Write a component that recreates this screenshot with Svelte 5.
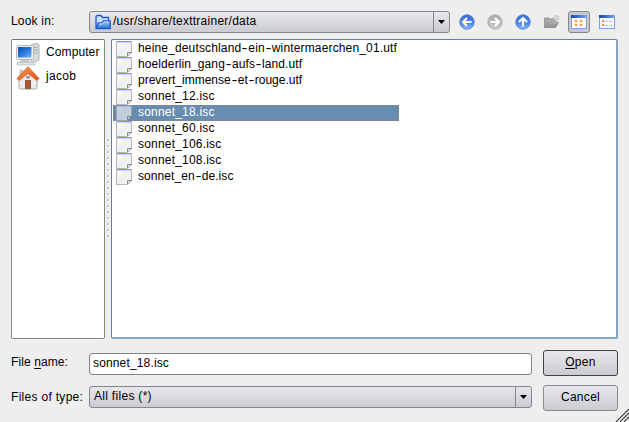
<script>
  const files = [
    ['heine_deutschland-ein-wintermaerchen_01.utf', 0.15],
    ['hoelderlin_gang-aufs-land.utf', 0.1],
    ['prevert_immense-et-rouge.utf', 0.0],
    ['sonnet_12.isc', 0.2],
    ['sonnet_18.isc', 0.2],
    ['sonnet_60.isc', 0.2],
    ['sonnet_106.isc', 0.2],
    ['sonnet_108.isc', 0.2],
    ['sonnet_en-de.isc', 0.07]
  ];
  const selected = 'sonnet_18.isc';
  const dots = Array.from({ length: 17 }, (_, i) => i);
</script>

{#snippet fileIcon()}
  <svg class="doc" width="16" height="16" viewBox="0 0 16 16">
    <path d="M.5 .5H15.5V11L11 15.5H.5Z" fill="url(#paper)" stroke="#b2b4ac" />
    <path d="M1 .5H15" stroke="#8294e6" />
    <path d="M1 1.5H15" stroke="#ccd4fa" />
    <path d="M11.5 15V11.5H15.5Z" fill="#fff" stroke="#888a80" />
  </svg>
{/snippet}

{#snippet round(kind, disabled)}
  <svg width="16" height="16" viewBox="0 0 16 16">
    <circle cx="8" cy="8" r="7.2" fill={disabled ? 'url(#grayball)' : 'url(#blueball)'} stroke={disabled ? '#aaa' : '#4a78d0'} stroke-width=".9" />
    <g transform={kind === 'right' ? 'rotate(180 8 8)' : kind === 'up' ? 'rotate(90 8 8)' : ''}>
      <path d="M12.5 8H4.5M8 4L4 8L8 12" fill="none" stroke="#fff" stroke-width="2.1" />
    </g>
  </svg>
{/snippet}

<div class="dialog">
  <svg class="defs" width="0" height="0">
    <defs>
      <linearGradient id="paper" x2="1" y2="1"><stop stop-color="#fff" /><stop offset=".5" stop-color="#eeeef0" /><stop offset="1" stop-color="#fff" /></linearGradient>
      <linearGradient id="blueball" x2="0" y2="1"><stop stop-color="#386dd8" /><stop offset=".6" stop-color="#4c8af0" /><stop offset="1" stop-color="#8cbcff" /></linearGradient>
      <linearGradient id="grayball" x2="0" y2="1"><stop stop-color="#aaa" /><stop offset="1" stop-color="#ccc" /></linearGradient>
      <linearGradient id="folder" x2="0" y2="1"><stop stop-color="#8fc4ff" /><stop offset="1" stop-color="#3278e4" /></linearGradient>
      <linearGradient id="screen" x2="1" y2="1"><stop stop-color="#0b50b8" /><stop offset=".5" stop-color="#2878dc" /><stop offset="1" stop-color="#76b8f8" /></linearGradient>
      <linearGradient id="titlebar" x2="1" y2="0"><stop stop-color="#1644b8" /><stop offset="1" stop-color="#70a8f0" /></linearGradient>
      <linearGradient id="roof" x2="1" y2="1"><stop stop-color="#ff9a58" /><stop offset="1" stop-color="#e4500e" /></linearGradient>
    </defs>
  </svg>

  <div class="row top">
    <span class="label">Look in:</span>
    <div class="combo path">
      <svg class="folder" width="16" height="16" viewBox="0 0 16 16">
        <path d="M1 14V3Q1 1.5 2.5 1.5H6L7.5 3.5H13.5V7" fill="#c8e0ff" stroke="#1c58cc" stroke-width="1.3" />
        <path d="M1.2 14.5L3.2 9H7L8.5 7H15.2V14.5Z" fill="url(#folder)" stroke="#1c58cc" stroke-width="1.3" />
        <path d="M4 10H7.5L9 8H14.3" fill="none" stroke="#d6eaff" />
      </svg>
      <span class="value">/usr/share/texttrainer/data</span>
      <span class="arrow"><svg width="7" height="4" viewBox="0 0 7 4"><path d="M0 0H7L3.5 4Z" /></svg></span>
    </div>
    <div class="tools">
      <span class="tool">{@render round('left', false)}</span>
      <span class="tool">{@render round('right', true)}</span>
      <span class="tool">{@render round('up', false)}</span>
      <span class="tool">
        <svg width="17" height="16" viewBox="0 0 17 16">
          <path d="M1.5 13V4H6L7 5H13V8" fill="#a8a8a8" stroke="#989898" />
          <path d="M1.5 13.5L5 8.5H15.5L12.5 13.5Z" fill="#999" stroke="#8c8c8c" />
          <path d="M5.5 9H14.5" stroke="#c5c5c5" />
          <path d="M13 .8L14 2.3L16 2L15 4L16 6L13.7 5.6L12 7L11.6 5L9.5 4L11.5 3Z" fill="#ddd" stroke="#bbb" stroke-width=".7" />
        </svg>
      </span>
      <span class="tool pressed">
        <svg width="16" height="16" viewBox="0 0 16 16">
          <rect x=".5" y="1.5" width="15" height="13" fill="#fff" stroke="#78a0e0" />
          <path d="M0 1H16V4H0Z" fill="url(#titlebar)" />
          <path d="M4 6h2v2H4zM9 6h2v2H9zM4 10h2v2H4zM9 10h2v2H9z" fill="#ee8e26" stroke="#f4b468" stroke-width=".6" />
        </svg>
      </span>
      <span class="tool">
        <svg width="16" height="16" viewBox="0 0 16 16">
          <rect x=".5" y="1.5" width="15" height="13" fill="#f8fbff" stroke="#78a0e0" />
          <path d="M0 1H16V4H0Z" fill="url(#titlebar)" />
          <path d="M3 6h2v2H3zM3 10h2v2H3z" fill="#ee8e26" />
          <path d="M6 7.5H8.5M10 7.5H13M6 11.5H8.5M10 11.5H13" stroke="#b4bec0" />
        </svg>
      </span>
    </div>
  </div>

  <div class="panes">
    <div class="places">
      <div class="place">
        <svg width="24" height="24" viewBox="0 0 24 24">
          <path d="M15.5 2.5L21 1.5L23 2.5V18L17 21L15.5 19Z" fill="#dcdedc" stroke="#b0b4b4" />
          <path d="M17.5 5.5L21.5 5M17.5 8.5L21.5 8M17.5 11H21.5" stroke="#a2a6a8" />
          <rect x=".5" y="3.5" width="17" height="14" rx="1" fill="#eef0f2" stroke="#b4b8bc" />
          <rect x="2" y="5" width="13.5" height="10.5" fill="url(#screen)" />
          <path d="M5 18H13L15 20H3Z" fill="#c4c8cc" />
          <path d="M1 20.5H17L19 23H1Z" fill="#e2e4e6" stroke="#b4b8ba" stroke-width=".7" />
        </svg>
        <span class="computer">Computer</span>
      </div>
      <div class="place">
        <svg width="24" height="24" viewBox="0 0 24 24">
          <path d="M3 12L12 4L21 12V21.5Q21 23 19.5 23H4.5Q3 23 3 21.5Z" fill="#ececec" stroke="#a8a8a8" />
          <path d="M4 4H7V10H4Z" fill="#ccc" stroke="#aaa" stroke-width=".6" />
          <path d="M12 .8L23 12.5L21 14.5L12 7.5L3 14.5L1 12.5Z" fill="url(#roof)" stroke="#d65a1c" stroke-width=".8" />
          <rect x="9.5" y="14.5" width="5" height="8" fill="#aa532c" stroke="#8c5944" />
          <rect x="10" y="10" width="4" height="2.5" fill="#9a9a9a" />
        </svg>
        <span class="jacob">jacob</span>
      </div>
    </div>
    <div class="splitter">{#each dots as dot (dot)}<i></i>{/each}</div>
    <div class="files">
      {#each files as [name, spacing] (name)}
        <div class="file" class:selected={name === selected} style:letter-spacing="{spacing}px">
          {@render fileIcon()}<span>{#each name.split('-') as part, i}{#if i}<b>-</b>{/if}{part}{/each}</span>
        </div>
      {/each}
    </div>
  </div>

  <div class="row name">
    <span class="label fn">File <u>n</u>ame:</span>
    <div class="input">sonnet_18.isc</div>
    <button class="open"><u>O</u>pen</button>
  </div>
  <div class="row type">
    <span class="label ft">Files of type:</span>
    <div class="combo filter">
      <span class="value">All files (*)</span>
      <span class="arrow"><svg width="7" height="4" viewBox="0 0 7 4"><path d="M0 0H7L3.5 4Z" /></svg></span>
    </div>
    <button>Cancel</button>
  </div>
  <svg class="grip" width="14" height="14" viewBox="0 0 14 14">
    <path d="M1 14L14 1M5 14L14 5M9 14L14 9" stroke="#444" stroke-width="1.3" />
    <path d="M2.5 14L14 2.5M6.5 14L14 6.5M10.5 14L14 10.5" stroke="#fff" stroke-width=".7" />
  </svg>
</div>

<style>
  :global(body) { margin: 0; overflow: hidden; }
  .dialog {
    position: relative; box-sizing: border-box; width: 629px; height: 422px; padding: 9px 11px 0;
    display: flex; flex-direction: column; background: #eee; color: #000;
    font: 12px/16px "Liberation Sans", Arial, sans-serif; white-space: nowrap; letter-spacing: .15px;
  }
  .dialog * { box-sizing: border-box; }
  svg { display: block; flex: none; }
  .defs, .grip { position: absolute; }
  .grip { right: 0; bottom: 0; }
  .row { display: flex; align-items: center; height: 26px; }
  .label { width: 78px; flex: none; padding-bottom: 2px; }
  .top .label { letter-spacing: .2px; }
  .combo {
    display: flex; align-items: center; height: 22px; border: 1px solid #84868a; border-radius: 3px;
    background: linear-gradient(#e7e7ec, #cbccd2);
  }
  .path { width: 361px; padding-left: 5px; }
  .value { padding-bottom: 2px; }
  .path .value { margin-left: 2px; letter-spacing: .25px; }
  .arrow {
    display: flex; align-items: center; justify-content: center; width: 16px; height: 20px;
    margin-left: auto; border-left: 1px solid #84868a;
  }
  .tools { display: flex; margin-left: 6px; }
  .tool { display: flex; align-items: center; justify-content: center; width: 22px; height: 22px; margin-right: 6px; border-radius: 3px; }
  .tool:last-child { margin-right: 0; }
  .pressed { border: 1px solid #85878a; background: #c6c8cd; }
  .panes { display: flex; height: 300px; margin-top: 4px; }
  .places { width: 94px; padding: 2px 4px; border: 1px solid #888; border-top-color: #707274; border-radius: 2px; background: #fff; }
  .place { display: flex; align-items: center; height: 24px; }
  .place span { margin-left: 6px; padding-bottom: 4px; letter-spacing: .1px; }
  .place .jacob { letter-spacing: .3px; }
  .splitter { display: flex; flex-direction: column; align-items: center; justify-content: center; gap: 4px; width: 6px; padding-bottom: 2px; }
  .splitter i { width: 2px; height: 2px; background: #c4c4c8; box-shadow: 1px 1px #fff; }
  .files { width: 507px; padding: 1px 0 0 1px; border: 1px solid #5e82a6; border-right: 2px solid #84a6c6; border-bottom: 2px solid #84a6c6; border-radius: 2px; background: #fff; }
  .file { display: flex; width: 286px; height: 16px; padding-left: 3px; }
  .file span { margin: -1px 0 0 6px; }
  .file b { display: inline-block; width: 7px; font-weight: normal; text-align: center; transform: scaleX(1.5); }
  .selected { background: #678db2; box-shadow: inset 0 0 0 1px #7c8797; color: #fff; }
  .selected .doc { opacity: .65; }
  .name { margin-top: 11px; }
  .type { margin-top: 9px; }
  .fn { letter-spacing: .1px; }
  .ft { letter-spacing: .3px; }
  .input { width: 443px; height: 22px; margin-top: 2px; padding: 1px 3px; border: 1px solid #818385; border-radius: 3px; background: #fff; }
  .filter { width: 443px; margin-bottom: 2px; padding-left: 4px; }
  .filter .value { letter-spacing: .3px; }
  button {
    width: 75px; height: 26px; margin-left: 11px; padding: 0 0 2px; border: 1px solid #8a8c8f; border-radius: 3px;
    background: linear-gradient(#e7e7ec, #cbccd2); color: #000; font: inherit; letter-spacing: .3px;
  }
  .open { border-color: #404246; }
  u { text-decoration: underline; text-underline-offset: 2px; }
</style>
